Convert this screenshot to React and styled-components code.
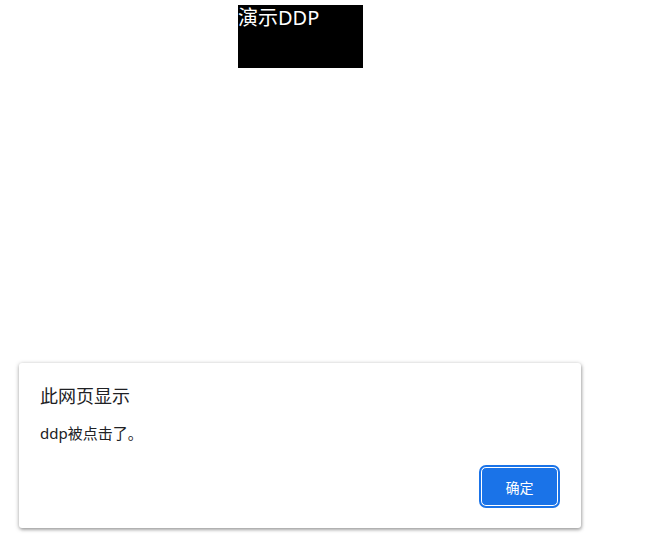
import React from "react";
import styled, { createGlobalStyle } from "styled-components";

const GlobalStyle = createGlobalStyle`
  html, body {
    margin: 0;
    padding: 0;
    background: #fff;
    font-family: "Noto Sans", "Noto Sans CJK SC", sans-serif;
  }
`;

const Page = styled.div`
  width: 645px;
  height: 536px;
  position: relative;
  overflow: hidden;
`;

const DemoBox = styled.div`
  margin: 5px 0 0 238px;
  width: 125px;
  height: 63px;
  background: #000;
  color: #fff;
  font-size: 20px;
  line-height: 26px;
  font-family: "Noto Sans", "Noto Sans CJK SC", sans-serif;
`;

const Dialog = styled.div`
  position: absolute;
  left: 19px;
  top: 363px;
  width: 562px;
  height: 165px;
  box-sizing: border-box;
  background: #fff;
  border-radius: 3px;
  box-shadow: 0 1px 4px rgba(0, 0, 0, 0.35), 1px 2px 3px rgba(0, 0, 0, 0.15);
  padding: 21px 21px 20px 21px;
  display: flex;
  flex-direction: column;
  font-family: "Noto Sans", "Noto Sans CJK SC", sans-serif;
  color: #202124;
`;

const Title = styled.div`
  font-size: 18px;
  line-height: 24px;
`;

const Message = styled.div`
  margin-top: 15px;
  font-size: 15px;
  line-height: 21px;
`;

const Actions = styled.div`
  margin-top: auto;
  display: flex;
  justify-content: flex-end;
`;

const OkButton = styled.button`
  width: 77px;
  height: 39px;
  margin: 0 2px 2px 0;
  background: #1a73e8;
  color: #fff;
  border: 1px solid #fff;
  border-radius: 5px;
  outline: 2px solid #1a73e8;
  font-family: "Noto Sans", "Noto Sans CJK SC", sans-serif;
  font-size: 14px;
  padding: 0;
`;

export default function App() {
  return (
    <Page>
      <GlobalStyle />
      <DemoBox>演示DDP</DemoBox>
      <Dialog>
        <Title>此网页显示</Title>
        <Message>ddp被点击了。</Message>
        <Actions>
          <OkButton>确定</OkButton>
        </Actions>
      </Dialog>
    </Page>
  );
}
